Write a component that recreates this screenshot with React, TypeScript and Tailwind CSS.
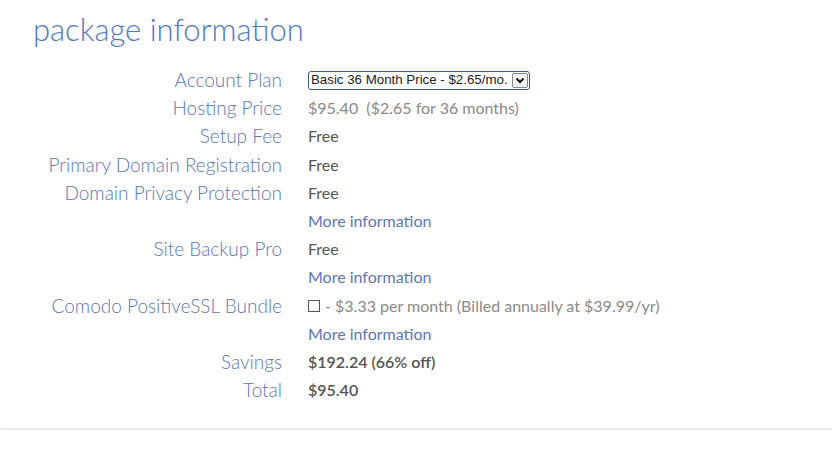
import { ReactNode } from "react";

type Row = {
  label?: string;
  value: ReactNode;
};

const rows: Row[] = [
  {
    label: "Account Plan",
    value: (
      <div className="flex h-[19px] w-[222px] items-center rounded-[3px] border border-[#3b5a8c] bg-white pl-[2px] text-[13.3px] leading-none text-[#222] [font-family:'Liberation_Sans',Arial,sans-serif]">
        <span className="flex-1 truncate">Basic 36 Month Price - $2.65/mo.</span>
        <span className="mr-[1px] flex h-[15px] w-[16px] items-center justify-center rounded-[2px] border border-[#888] bg-[#eee]">
          <svg width="10" height="7" viewBox="0 0 10 7">
            <path d="M1.5 1.5 L5 5 L8.5 1.5" stroke="#111" strokeWidth="2" fill="none" />
          </svg>
        </span>
      </div>
    ),
  },
  {
    label: "Hosting Price",
    value: <span className="text-[#8a8a8a]">$95.40&nbsp;&nbsp;($2.65 for 36 months)</span>,
  },
  { label: "Setup Fee", value: "Free" },
  { label: "Primary Domain Registration", value: "Free" },
  { label: "Domain Privacy Protection", value: "Free" },
  { value: <span className="text-[#5a76b8]">More information</span> },
  { label: "Site Backup Pro", value: "Free" },
  { value: <span className="text-[#5a76b8]">More information</span> },
  {
    label: "Comodo PositiveSSL Bundle",
    value: (
      <span className="flex items-center text-[#8a8a8a]">
        <span className="mr-[5px] inline-block h-[12px] w-[12px] border border-[#555] bg-white" />
        - $3.33 per month (Billed annually at $39.99/yr)
      </span>
    ),
  },
  { value: <span className="text-[#5a76b8]">More information</span> },
  {
    label: "Savings",
    value: <span className="font-semibold text-[#555]">$192.24 (66% off)</span>,
  },
  {
    label: "Total",
    value: <span className="font-semibold text-[#555]">$95.40</span>,
  },
];

export default function App() {
  return (
    <div className="h-[455px] w-[832px] overflow-hidden bg-white [font-family:Lato,'Open_Sans',sans-serif]">
      <div className="px-[33px] pt-[8px]">
        <h1 className="text-[31px] font-light leading-[42px] text-[#4f78c4]">package information</h1>
      </div>
      <div className="mt-[16px] grid grid-cols-[282px_1fr] gap-x-[26px] leading-[28.2px]">
        {rows.map((row, i) => (
          <div key={i} className="contents">
            <div className="text-right text-[19px] font-light text-[#5a76b8]">{row.label ?? ""}</div>
            <div className="flex h-[28.2px] items-center text-[16px] font-normal text-[#555]">{row.value}</div>
          </div>
        ))}
      </div>
      <div className="mt-[24px] h-[2px] w-full rounded-l bg-[#e4ecf2]" />
    </div>
  );
}
